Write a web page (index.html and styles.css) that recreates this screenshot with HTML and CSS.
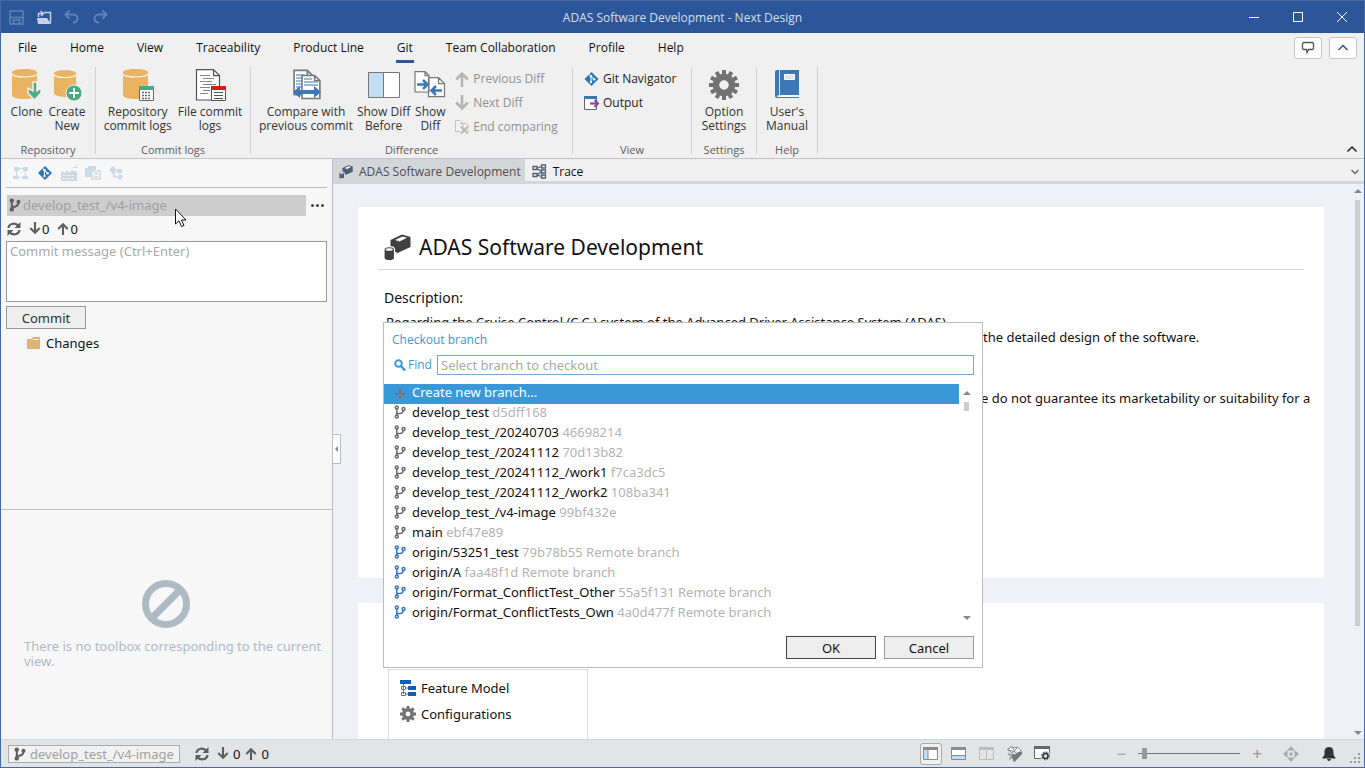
FILE: index.html
```html
<!DOCTYPE html>
<html lang="en">
<head>
<meta charset="utf-8">
<title>ADAS Software Development - Next Design</title>
<link rel="stylesheet" href="styles.css">
</head>
<body>
<svg class="defs" aria-hidden="true">
  <symbol id="db" viewBox="0 0 26 32"><path fill="#e9b361" d="M0 3.500C0 1.500 5 0 12.500 0S25 1.500 25 3.500V26c0 2.500-5.500 4-12.500 4S0 28.500 0 26z"/><path fill="none" stroke="#fff" stroke-width="1.200" d="M0 5c1 2 6 3 12.500 3S24 7 25 5"/></symbol>
  <symbol id="branch" viewBox="0 0 12 14"><g fill="none" stroke="currentColor" stroke-width="1.500"><circle cx="2.800" cy="2.500" r="1.500"/><circle cx="2.800" cy="11.500" r="1.500"/><circle cx="9.500" cy="4" r="1.500"/><path d="M2.800 4v6M3 8.500h3q3 0 3.300-3"/></g></symbol>
  <symbol id="branch-bold" viewBox="0 0 12 14"><g fill="currentColor"><circle cx="2.800" cy="2.600" r="2.200"/><circle cx="2.800" cy="11.400" r="2.200"/><circle cx="9.500" cy="3.800" r="2"/></g><path fill="none" stroke="currentColor" stroke-width="2" d="M2.800 3v8M3 9q6.500 0 6.500-5"/></symbol>
  <symbol id="git" viewBox="0 0 14 14"><path fill="#2e75b5" d="M7 0l7 7-7 7-7-7z"/><g fill="#fff"><circle cx="6.500" cy="4.300" r="1.200"/><circle cx="6.500" cy="10" r="1.200"/><circle cx="9.600" cy="7.300" r="1.200"/></g><path fill="none" stroke="#fff" d="M4.500 2l2 2.300V10M6.500 4.300l3 3"/></symbol>
  <symbol id="down" viewBox="0 0 14 16"><path fill="none" stroke="currentColor" stroke-width="2.600" d="M7 0v13M1.200 7.500L7 13.300l5.800-5.800"/></symbol>
  <symbol id="up" viewBox="0 0 14 16"><path fill="none" stroke="currentColor" stroke-width="2.600" d="M7 16V3M1.200 8.500L7 2.700l5.800 5.800"/></symbol>
  <symbol id="sync" viewBox="0 0 14 14"><path fill="none" stroke="currentColor" stroke-width="2.200" d="M1.500 6C2 1 8.500.3 11.500 3.800M12.500 8c-.5 5-7 5.700-10 2.200"/><path fill="currentColor" d="M13.500 0v6h-6zM.5 14V8h6z"/></symbol>
  <symbol id="gear" viewBox="0 0 30 30"><circle cx="15" cy="15" r="8" fill="none" stroke="currentColor" stroke-width="6.500"/><path stroke="currentColor" stroke-width="4" d="M15 0v6M15 24v6M0 15h6M24 15h6M7.500 2l3 5.200M19.500 22.800l3 5.200M22.500 2l-3 5.200M10.500 22.800l-3 5.200M2 7.500l5.200 3M22.800 19.500l5.200 3M2 22.500l5.200-3M22.800 10.500l5.200-3"/></symbol>
  <symbol id="gear-small" viewBox="0 0 16 16"><circle cx="8" cy="8" r="4.200" fill="none" stroke="currentColor" stroke-width="3.600"/><path stroke="currentColor" stroke-width="3" d="M8 0v3M8 13v3M0 8h3M13 8h3M2.300 2.300l2.200 2.200M11.500 11.500l2.200 2.200M13.700 2.300l-2.200 2.200M4.500 11.500l-2.200 2.200"/></symbol>
  <symbol id="shapes" viewBox="0 0 27 27"><path fill="currentColor" d="M6.500 6L18 .500l8.500 2.500V13l-13 6L6.500 15z"/><path fill="#fff" d="M11 6l7.500-3.500 4.500 1.300-7.500 3.700z"/><path fill="currentColor" stroke="#fff" stroke-width="1.200" d="M0 15.500c0-3.800 10.500-3.800 10.500 0V24c0 3.500-10.500 3.500-10.500 0z"/><ellipse cx="5.200" cy="15.500" rx="3.600" ry="1.300" fill="#fff"/></symbol>
  <symbol id="page" viewBox="0 0 20 24"><path fill="#fff" stroke="currentColor" stroke-width="1.500" d="M1 1h12l5 5v17H1zM13 1v5h5"/></symbol>
</svg>

<div class="window">
  <header class="titlebar">
    <div class="quick">
      <button aria-label="Save"><svg class="dim" width="15" height="15"><path fill="none" stroke="#fff" stroke-width="1.500" d="M1 1h13v13H1zM1 7.500h13M4.500 14v-4h6v4"/></svg></button>
      <button aria-label="Open"><svg width="16" height="16"><path fill="none" stroke="#c5d2e7" stroke-width="1.500" d="M2.500 8V4.500H7M4.500 2L7.500 4.500 5 7M8 3.500h6.500V14"/><path fill="#c5d2e7" d="M1 9h10l4 6H2z"/></svg></button>
      <button aria-label="Undo"><svg class="dim" width="16" height="16"><path fill="none" stroke="#fff" stroke-width="2" d="M5.500 1.500l-4 4 4 4M2 5.500h7c6 0 6 8 0 8"/></svg></button>
      <button aria-label="Redo"><svg class="dim" width="16" height="16"><path fill="none" stroke="#fff" stroke-width="2" d="M10.500 1.500l4 4-4 4M14 5.500H7c-6 0-6 8 0 8"/></svg></button>
    </div>
    <h1>ADAS Software Development - Next Design</h1>
    <div class="winctl">
      <button aria-label="Minimize"><svg width="12" height="12"><path stroke="#fff" d="M1 6.500h10"/></svg></button>
      <button aria-label="Maximize"><svg width="12" height="12"><path fill="none" stroke="#fff" d="M1.500 1.500h9v9h-9z"/></svg></button>
      <button aria-label="Close"><svg width="12" height="12"><path stroke="#fff" d="M1 1l10 10M11 1L1 11"/></svg></button>
    </div>
  </header>

  <nav class="menu">
    <button>File</button><button>Home</button><button>View</button><button>Traceability</button><button>Product Line</button><button class="on">Git</button><button>Team Collaboration</button><button>Profile</button><button>Help</button>
    <div class="menu-right">
      <button class="chip" aria-label="Feedback"><svg width="14" height="14"><path fill="none" stroke="#555" stroke-width="1.300" d="M2.500 1.500h9l1 1v5l-1 1H7.500L6 11.500l-.5-3h-3l-1-1v-5z"/></svg></button>
      <button class="chip" aria-label="Collapse"><svg width="12" height="12"><path fill="none" stroke="#2b579a" stroke-width="1.500" d="M1.500 8L6 3.500 10.500 8"/></svg></button>
    </div>
  </nav>

  <div class="ribbon">
    <section class="group g-repo">
      <div class="tools">
        <button class="big"><svg width="32" height="32"><use href="#db" x="1" y="0" width="26" height="32"/><path fill="#4db083" stroke="#f0f0f0" stroke-width="1.500" d="M22 13h4v9l4-3v5l-6.500 7-6.500-7v-5l5 3z"/></svg><span>Clone</span></button>
        <button class="big"><svg width="32" height="32"><use href="#db" x="3" y="1" width="23" height="29"/><circle cx="23" cy="24" r="8" fill="#48ac82" stroke="#f0f0f0"/><path stroke="#fff" stroke-width="2" d="M23 19v10M18 24h10"/></svg><span>Create<br>New</span></button>
      </div>
      <h2>Repository</h2>
    </section>
    <section class="group g-logs">
      <div class="tools">
        <button class="big"><svg width="32" height="32"><use href="#db" x="1" y="0" width="26" height="32"/><path fill="#fff" stroke="#666" d="M17.500 17.500h14v14h-14z"/><path fill="#48ac82" d="M17 17h15v4H17z"/><path stroke="#666" stroke-width="1.500" stroke-dasharray="2 1" d="M20 23.500h9M20 26.500h9M20 29.500h9"/></svg><span>Repository<br>commit logs</span></button>
        <button class="big"><svg width="32" height="32"><path fill="#fff" stroke="#555" stroke-width="1.200" d="M2.500.600h17l6 6V31h-23zM19.500.600v6h6"/><path stroke="#888" d="M6 6.500h10M9 9.500h11M6 12.500h12M9 15.500h13M6 18.500h10M9 21.500h7M6 24.500h8"/><path fill="#fff" stroke="#555" d="M17.500 17.500h14v14h-14z"/><path fill="#d81e05" d="M17 17h15v4H17z"/><path stroke="#555" d="M20 23.500h9M20 26.500h9M20 29.500h9"/></svg><span>File commit<br>logs</span></button>
      </div>
      <h2>Commit logs</h2>
    </section>
    <section class="group g-diff">
      <div class="tools">
        <button class="big"><svg width="32" height="32"><use href="#page" x="3" y="0" width="22" height="27" color="#777"/><path stroke="#78a7d4" stroke-width="1.500" d="M6 6h9M6 9h12M6 12h7M6 15h7M6 18h7"/><use href="#page" x="11" y="5" width="21" height="26" color="#777"/><path stroke="#78a7d4" stroke-width="1.500" d="M14 10h8M14 13h14M14 16h14"/><path fill="#3c78b5" d="M3 23l7-6v4h14v-4l7 6-7 6v-4H10v4z"/></svg><span>Compare with<br>previous commit</span></button>
        <button class="big"><svg width="34" height="32"><path fill="#fff" stroke="#777" d="M1.500 3.500h31v25h-31z"/><path fill="#c1dff2" stroke="#777" d="M1.500 3.500h15v25h-15z"/></svg><span>Show Diff<br>Before</span></button>
        <button class="big"><svg width="32" height="32"><path fill="#fff" stroke="#777" stroke-width="1.200" d="M1 2.600h10l4 4V23H1zM11 2.600v4h4M14.500 8.600h10l6 6v13h-16zM24.500 8.600v6h6"/><path fill="none" stroke="#3c78b5" stroke-width="2.500" d="M3 15.500h10M9 11l4.500 4.500L9 20M28 21.500H18M22 17l-4.500 4.500L22 26"/></svg><span>Show<br>Diff</span></button>
        <div class="stack">
          <button class="small off"><svg width="14" height="16"><use href="#up"/></svg>Previous Diff</button>
          <button class="small off"><svg width="14" height="16"><use href="#down"/></svg>Next Diff</button>
          <button class="small off"><svg width="14" height="16"><path fill="none" stroke="#c4c4c4" d="M5 12.500H.500v-11H5l3 3v8M5 4.500h6l3 3v5"/><path stroke="#bbb" stroke-width="2.200" d="M6 7.500l7 7M13 7.500l-7 7"/></svg>End comparing</button>
        </div>
      </div>
      <h2>Difference</h2>
    </section>
    <section class="group g-view">
      <div class="tools">
        <div class="stack">
          <button class="small"><svg width="15" height="14"><use href="#git"/></svg>Git Navigator</button>
          <button class="small"><svg width="15" height="14"><path fill="#fff" stroke="#666" d="M.500.500h12v13H.500z"/><path fill="#3c78b5" d="M0 0h13v3H0z"/><path stroke="#f0f0f0" stroke-width="5" d="M7 7.500h8"/><path fill="none" stroke="#8544a5" stroke-width="2" d="M6 7.500h8M10.500 4l3.500 3.500-3.500 3.500"/></svg>Output</button>
        </div>
      </div>
      <h2>View</h2>
    </section>
    <section class="group g-set">
      <div class="tools"><button class="big"><svg class="c-gear" width="32" height="32"><use href="#gear" x="1" y="1" width="30" height="30"/></svg><span>Option<br>Settings</span></button></div>
      <h2>Settings</h2>
    </section>
    <section class="group g-help">
      <div class="tools"><button class="big"><svg width="32" height="32"><path fill="#3c78b5" d="M4 3q0-2 2-2h22v25H8q-2 0-2 2h22v1H7q-3 0-3-2z"/><path fill="#fff" d="M6.500 26.500H28v1.500H7z"/><path stroke="#fff" stroke-width=".8" d="M8.500 1v25"/><path fill="#d8e6f5" stroke="#fff" d="M13.500 5.500h10v5h-10z"/></svg><span>User's<br>Manual</span></button></div>
      <h2>Help</h2>
    </section>
    <button class="fold" aria-label="Collapse ribbon"><svg width="12" height="10"><path fill="none" stroke="#222" stroke-width="1.500" d="M1.500 7.500L6 3l4.500 4.500"/></svg></button>
  </div>

  <div class="body">
    <aside class="side">
      <div class="git-pane">
        <div class="iconrow">
          <svg width="16" height="14" fill="#cbdae6"><path d="M1 1h5v4H1zM10 1h5v4h-5zM0 10h6v3H0zM9 10h6v3H9z"/><path fill="none" stroke="#cbdae6" d="M1 2.500h14M3.500 5v5M12.500 5v5"/></svg>
          <svg width="16" height="14"><use href="#git"/></svg>
          <svg width="16" height="16" fill="#cbdae6"><path d="M0 16V6l5 2V5.500l5 2V5l6 2v9zM12 2h3V0h1v3h-4z"/><path stroke="#f7f7f7" stroke-dasharray="2 1" d="M2 10.500h12M2 13.500h12"/></svg>
          <svg width="16" height="16" fill="#cbdae6"><path d="M0 3h3V1h8v4H6v7H0z"/><path fill="#f7f7f7" stroke="#cbdae6" stroke-width="1.500" d="M6.700 6h8.500v8H6.700zM9 8.500h4M9 11.500h4"/></svg>
          <svg width="16" height="16" fill="#cbdae6"><path d="M0 5l4-4 4 4-4 4zM8 4h5v4H8zM11 9l3 3-3 3-3-3z"/><path fill="none" stroke="#cbdae6" stroke-width="1.500" d="M5 6v6h5"/></svg>
        </div>
        <div class="branchrow">
          <button class="branchbox"><svg width="12" height="14"><use href="#branch-bold"/></svg>develop_test_/v4-image</button>
          <button class="dots" aria-label="More"><i></i><i></i><i></i></button>
        </div>
        <div class="syncrow"><svg width="14" height="14"><use href="#sync"/></svg><span><svg width="12" height="13"><use href="#down"/></svg>0</span><span><svg width="12" height="13"><use href="#up"/></svg>0</span></div>
        <textarea aria-label="Commit message" placeholder="Commit message (Ctrl+Enter)"></textarea>
        <button class="btn commit">Commit</button>
        <div class="changes"><svg width="14" height="12"><path fill="#deb473" d="M0 2h5l1-2h7v12H0z"/><path stroke="#f7f7f7" d="M6 2.500h6"/></svg>Changes</div>
      </div>
      <div class="toolbox">
        <svg width="48" height="48"><g fill="none" stroke="#afbac4" stroke-width="7"><circle cx="24" cy="24" r="20.500"/><path d="M10 38L38 10"/></g></svg>
        <p>There is no toolbox corresponding to the current view.</p>
      </div>
    </aside>

    <main class="main">
      <div class="tabs">
        <button class="tab on"><svg width="14" height="14"><use href="#shapes"/></svg>ADAS Software Development</button>
        <button class="tab"><svg width="15" height="15"><g fill="none" stroke="#4d6079" stroke-width="1.300"><path d="M1 2.500h4v3H1zM1 9.500h4v3H1zM9.500 1h4v3h-4zM9.500 6h4v3h-4zM9.500 11h4v3h-4zM5 4l4.500-1.500M5 4.500l4.500 3M5 11l4.500-3.500M5 11l4.500 1.500"/></g></svg>Trace</button>
        <button class="more" aria-label="Tab list"><svg width="10" height="8"><path fill="none" stroke="#666" stroke-width="1.300" d="M1.500 2L5 5.500 8.500 2"/></svg></button>
      </div>
      <div class="view">
        <div class="cards">
          <article class="card first">
            <h2 class="doc-title"><svg width="27" height="27"><use href="#shapes"/></svg>ADAS Software Development</h2>
            <h3>Description:</h3>
            <div class="prose">
              <p>Regarding the Cruise Control (C.C.) system of the Advanced Driver Assistance System (ADAS).</p>
              <p class="tail">the detailed design of the software.</p>
              <p class="tail last">e do not guarantee its marketability or suitability for a</p>
            </div>
          </article>
          <article class="card second">
            <ul class="models">
              <li><svg width="16" height="16"><path fill="#1160b7" d="M0 0h11v4H0zM8 6h8v4H8zM8 12h8v4H8z"/><path fill="none" stroke="#777" d="M3.500 4v10M1.500 6.500h4v3h-4zM1.500 12.500h4v3h-4zM5.500 8H8M5.500 14H8"/></svg>Feature Model</li>
              <li><svg width="16" height="16" class="c-gear"><use href="#gear-small"/></svg>Configurations</li>
            </ul>
          </article>
        </div>
        <div class="vscroll"><i class="tri up"></i><b></b><i class="tri down"></i></div>
        <button class="grip" aria-label="Collapse panel"><i></i></button>
      </div>
    </main>
  </div>

  <footer class="status">
    <button class="status-branch"><svg width="12" height="14"><use href="#branch-bold"/></svg>develop_test_/v4-image</button>
    <div class="status-sync"><svg width="14" height="14"><use href="#sync"/></svg><span><svg width="12" height="13"><use href="#down"/></svg>0</span><span><svg width="12" height="13"><use href="#up"/></svg>0</span></div>
    <div class="status-tools">
      <button class="on" aria-label="Left pane"><svg width="16" height="14"><path fill="#fff" stroke="#8a8a8a" d="M.500.500h14v12H.500z"/><path fill="#c0dcfa" d="M1 3h4v9H1z"/><path fill="#8a8a8a" d="M0 0h15v3H0zM4.500 2h1v11h-1z"/></svg></button>
      <button aria-label="Bottom pane"><svg width="16" height="14"><path fill="#fff" stroke="#8a8a8a" d="M.500.500h14v12H.500z"/><path fill="#c0dcfa" d="M1 9h13v3H1z"/><path fill="#8a8a8a" d="M0 0h15v3H0zM0 8h15v1H0z"/></svg></button>
      <button aria-label="Split pane"><svg width="16" height="14"><path fill="#e4e4e4" stroke="#bdbdbd" d="M.500.500h14v12H.500zM7.500 0v13"/><path fill="#bdbdbd" d="M0 0h15v3H0z"/></svg></button>
      <button aria-label="Tag"><svg width="17" height="17"><path fill="#fff" stroke="#888" d="M1.500 4.500l4-3 3 1.500 3-1 4 4-4 3-3-2.500-3 1z"/><path fill="none" stroke="#888" d="M5.500 1.500L9 6.500M1.500 4.500l6 2 4-4"/><path fill="#777" d="M5 11l1-2.500 3 1 4-3 3 .5v2l-8 8.500-1-3z"/><path fill="none" stroke="#999" stroke-width="1.500" d="M2 8.500l4 2.500-2.500 3.500"/></svg></button>
      <button aria-label="Window settings"><svg width="17" height="15"><path fill="#fff" stroke="#666" d="M.500.500h15v12H.500z"/><path fill="#666" d="M0 0h16v3H0z"/><circle cx="11.500" cy="10" r="5" fill="#e2e4e6"/><circle cx="11.500" cy="10" r="2.500" fill="none" stroke="#333" stroke-width="1.500"/><circle cx="11.500" cy="10" r="3.800" fill="none" stroke="#333" stroke-dasharray="1.500 1.500"/></svg></button>
    </div>
    <div class="zoomer"><span>−</span><input type="range" aria-label="Zoom" min="0" max="100" value="4"><span>+</span></div>
    <svg class="s-move" width="16" height="16" fill="#aaa"><path d="M8 0l4 4.500H4zM8 16l4-4.500H4zM0 8l4.500-4v8zM16 8l-4.500-4v8zM6.500 6.500h3v3h-3z"/></svg>
    <svg class="s-bell" width="14" height="14"><path fill="#333" d="M7 0c4 0 4.500 3 4.500 6 0 2.500.5 3 2 4.500v1H.5v-1C2 9 2.500 8.500 2.500 6c0-3 .5-6 4.500-6zM5 12h4q-.5 2-2 2t-2-2z"/></svg>
    <svg class="s-size" width="12" height="12" fill="#999"><path d="M9 1h2v2H9zM5 5h2v2H5zM9 5h2v2H9zM1 9h2v2H1zM5 9h2v2H5zM9 9h2v2H9z"/></svg>
  </footer>

  <div class="dialog" role="dialog" aria-label="Checkout branch">
    <h2>Checkout branch</h2>
    <div class="find"><label for="find"><svg width="12" height="12"><circle cx="4.500" cy="4.500" r="3.300" fill="none" stroke="#3b99d8" stroke-width="2"/><path stroke="#3b99d8" stroke-width="2.500" d="M7 7l4 4.500"/></svg>Find</label><input id="find" type="text" placeholder="Select branch to checkout"></div>
    <div class="listwrap">
      <ul class="list">
        <li class="sel"><svg width="12" height="14"><path stroke="#777" stroke-width="2" d="M6 4v10M1 9h10"/></svg>Create new branch...</li>
        <li><svg width="12" height="14"><use href="#branch"/></svg>develop_test <em>d5dff168</em></li>
        <li><svg width="12" height="14"><use href="#branch"/></svg>develop_test_/20240703 <em>46698214</em></li>
        <li><svg width="12" height="14"><use href="#branch"/></svg>develop_test_/20241112 <em>70d13b82</em></li>
        <li><svg width="12" height="14"><use href="#branch"/></svg>develop_test_/20241112_/work1 <em>f7ca3dc5</em></li>
        <li><svg width="12" height="14"><use href="#branch"/></svg>develop_test_/20241112_/work2 <em>108ba341</em></li>
        <li><svg width="12" height="14"><use href="#branch"/></svg>develop_test_/v4-image <em>99bf432e</em></li>
        <li><svg width="12" height="14"><use href="#branch"/></svg>main <em>ebf47e89</em></li>
        <li class="remote"><svg width="12" height="14"><use href="#branch"/></svg>origin/53251_test <em>79b78b55 Remote branch</em></li>
        <li class="remote"><svg width="12" height="14"><use href="#branch"/></svg>origin/A <em>faa48f1d Remote branch</em></li>
        <li class="remote"><svg width="12" height="14"><use href="#branch"/></svg>origin/Format_ConflictTest_Other <em>55a5f131 Remote branch</em></li>
        <li class="remote"><svg width="12" height="14"><use href="#branch"/></svg>origin/Format_ConflictTests_Own <em>4a0d477f Remote branch</em></li>
      </ul>
      <div class="lscroll"><i class="tri up"></i><b></b><i class="tri down"></i></div>
    </div>
    <div class="actions"><button class="btn ok">OK</button><button class="btn">Cancel</button></div>
  </div>

  <svg class="cursor" width="14" height="20"><path fill="#fff" stroke="#111" d="M1.500 1v15l3.500-3.200 2.500 5.700 2.500-1-2.500-5.500h4.500z"/></svg>
</div>
</body>
</html>
```
FILE: styles.css
```css
* { box-sizing: border-box; }
body { margin: 0; font: 13px/20px "Noto Sans", sans-serif; color: #111; }
button, input, textarea { font: inherit; color: inherit; margin: 0; }
button { background: none; border: 0; padding: 0; }
h1, h2, h3, p, ul { margin: 0; padding: 0; font-weight: normal; }
ul { list-style: none; }
svg { display: block; flex: none; }
.defs { position: absolute; width: 0; height: 0; }

.window { position: relative; height: 100vh; display: flex; flex-direction: column; border: 1px solid #4469a3; background: #f0f0f0; overflow: hidden; }

.titlebar { display: grid; grid-template-columns: 1fr auto 1fr; align-items: center; height: 32px; flex: none; background: #2b579a; color: #d5deeb; }
.titlebar h1 { padding-top: 2px; font: 12px/16px "Open Sans", sans-serif; }
.quick { display: flex; gap: 12px; padding-left: 8px; }
.dim { opacity: .25; }
.winctl { display: flex; justify-content: flex-end; gap: 32px; padding-right: 16px; }

.menu { display: flex; gap: 1px; height: 30px; flex: none; padding-left: 1px; font-family: "Open Sans", sans-serif; font-size: 12px; }
.menu > button { padding: 0 16px; position: relative; }
.menu > .on::after { content: ""; position: absolute; left: 15px; right: 15px; bottom: 0; height: 3px; background: #2b579a; }
.menu-right { margin-left: auto; display: flex; align-items: center; gap: 7px; padding-right: 7px; }
.chip { display: grid; place-items: center; width: 28px; height: 22px; border: 1px solid #c4c4c4; border-radius: 3px; background: #fff; }

.ribbon { display: flex; height: 96px; flex: none; padding: 4px 0; border-bottom: 1px solid #c2c3c6; font: 12px/14px "Open Sans", sans-serif; color: #333; }
.group { display: flex; flex-direction: column; justify-content: space-between; align-items: center; border-right: 1px solid #d2d2d2; }
.group h2 { font-size: 11px; line-height: 8px; color: #5c5c5c; }
.g-repo { width: 95px; } .g-logs { width: 155px; } .g-diff { width: 322px; }
.g-view { width: 119px; } .g-set { width: 65px; } .g-help { width: 61px; }
.tools { display: flex; justify-content: center; gap: 6px; }
.g-diff .tools { align-self: stretch; justify-content: flex-start; gap: 4px; padding-left: 8px; }
.g-diff .stack { padding-left: 5px; }
.g-view .tools { align-self: stretch; justify-content: flex-start; padding-left: 11px; }
.big { display: flex; flex-direction: column; align-items: center; gap: 4px; padding-top: 2px; justify-content: flex-start; white-space: nowrap; }
.stack { display: flex; flex-direction: column; }
.small { display: flex; align-items: center; gap: 4px; height: 24px; white-space: nowrap; color: #222; }
.off { color: #909090; }
.off svg { color: #b5b5b5; }
.c-gear { color: #737373; }
.fold { margin-left: auto; align-self: flex-end; padding-right: 6px; }

.body { flex: 1; min-height: 0; display: flex; }
.side { width: 332px; flex: none; display: flex; flex-direction: column; background: #f7f7f7; border-right: 1px solid #bcbdc0; }
.git-pane { height: 351px; flex: none; padding: 0 5px; border-bottom: 1px solid #bcbdc0; }
.iconrow { display: flex; align-items: center; gap: 8px; height: 29px; padding-left: 7px; border-bottom: 1px solid #bcbdc0; }
.branchrow { display: flex; padding: 7px 0 0 1px; }
.branchbox { flex: 1; display: flex; align-items: center; gap: 2px; height: 21px; margin-right: 5px; padding: 0 0 2px 2px; background: #cdcdcd; color: #a0a0a0; }
.branchbox svg, .syncrow svg, .status svg { color: #5e5e5e; }
.dots { display: flex; align-items: center; gap: 2px; padding-right: 3px; }
.dots i { width: 3px; height: 3px; border-radius: 2px; background: #444; }
.syncrow { display: flex; align-items: center; gap: 8px; height: 25px; padding-left: 1px; }
.syncrow span { display: flex; align-items: center; gap: 1px; }
textarea { display: block; width: 100%; height: 61px; padding: 0 3px; border: 1px solid #999; background: #fff; line-height: 18px; resize: none; outline: 0; }
::placeholder { color: #a9a9a9; opacity: 1; }
.btn { width: 90px; height: 23px; border: 1px solid #9a9a9a; background: #eee; padding-top: 1px; line-height: 20px; }
.commit { width: 80px; margin-top: 4px; color: #333; }
.changes { display: flex; align-items: center; gap: 5px; height: 20px; margin-top: 4px; padding-left: 21px; }
.toolbox { display: flex; flex-direction: column; align-items: center; gap: 11px; padding: 70px 2px 0 0; color: #afbac4; line-height: 15px; }
.toolbox p { align-self: stretch; padding-left: 23px; }

.main { flex: 1; min-width: 0; display: flex; flex-direction: column; background: #f0f1f6; }
.tabs { display: flex; height: 25px; flex: none; background: linear-gradient(#f0f0f0 22px, #d4d5d9 22px); font: 12px/22px "Open Sans", sans-serif; }
.tab { display: flex; align-items: center; gap: 6px; padding: 0 7px; }
.tab.on { padding: 0 4px 0 6px; background: #d4d5d9; color: #505050; }
.tab svg { color: #4d6079; }
.more { margin-left: auto; padding-right: 4px; }
.view { flex: 1; min-height: 0; position: relative; display: flex; overflow: hidden; }
.cards { flex: 1; min-width: 0; display: flex; flex-direction: column; gap: 25px; padding: 23px 27px 0 25px; }
.card { background: #fff; border-radius: 2px; flex: none; }
.first { height: 371px; padding: 20px; }
.doc-title { display: flex; align-items: center; gap: 8px; height: 43px; padding: 0 0 2px 6px; border-bottom: 1px solid #d9d9d9; font-size: 21px; }
.doc-title svg { color: #404040; }
.card h3 { font-size: 14px; line-height: 20px; padding: 18px 0 0 6px; }
.prose { padding: 7px 0 0 8px; line-height: 15px; white-space: nowrap; }
.tail { padding-left: 597px; }
.last { padding: 46px 0 0 595px; }
.second { height: 400px; padding: 66px 30px 0; }
.models { width: 200px; height: 200px; padding: 5px 11px; border: 1px solid #ddd; }
.models li { display: flex; align-items: center; gap: 5px; height: 26px; }

.tri { border: 4px solid transparent; }
.tri.up { border-top: 0; border-bottom-color: #888; }
.tri.down { border-bottom: 0; border-top-color: #888; }
.vscroll { width: 13px; flex: none; display: flex; flex-direction: column; align-items: center; padding: 5px 0 4px; }
.vscroll b { width: 5px; height: 426px; margin: 7px 0 auto; background: #cdcdcd; }
.grip { position: absolute; left: 0; top: 250px; width: 8px; height: 30px; border: 1px solid #bbb; border-left: 0; background: #fff; }
.grip i { display: block; width: 0; border: 3px solid transparent; border-left: 0; border-right-color: #888; margin-left: 2px; }

.status { display: flex; align-items: center; height: 28px; flex: none; padding: 0 3px 0 7px; border-top: 1px solid #d3d5d7; background: #e2e4e6; }
.status-branch { display: flex; align-items: center; gap: 4px; width: 172px; height: 18px; padding-left: 5px; border: 1px solid #a9abad; background: #f2f2f2; color: #a0a0a0; white-space: nowrap; }
.status-sync { display: flex; align-items: center; gap: 8px; padding-left: 15px; }
.status-sync span { display: flex; align-items: center; gap: 4px; }
.status-sync span + span { margin-left: -3px; }
.status-tools { margin-left: auto; display: flex; gap: 6px; }
.status-tools button { display: grid; place-items: center; width: 22px; height: 22px; }
.status-tools .on { border: 1px solid #aaa; border-radius: 3px; background: #f0f0f0; }
.zoomer { display: flex; align-items: center; gap: 12px; margin-left: 63px; color: #999; font-size: 17px; }
.zoomer input { appearance: none; width: 102px; height: 12px; background: linear-gradient(#777, #777) center / 100% 1px no-repeat; }
.zoomer input::-webkit-slider-thumb { appearance: none; width: 5px; height: 11px; background: #999; }
.s-move { margin: 0 23px 0 21px; }
.s-bell { margin-right: 13px; }
.s-size { align-self: flex-end; margin-bottom: 3px; }

.dialog { position: absolute; left: 382px; top: 321px; width: 600px; border: 1px solid #bcbcbc; background: #fff; padding: 7px 8px 8px 0; color: #111; }
.dialog h2 { padding-left: 8px; font: 12px/20px "Open Sans", sans-serif; color: #3b99d8; }
.find { display: flex; align-items: center; padding: 5px 0 0 10px; }
.find label { display: flex; align-items: center; gap: 2px; width: 43px; color: #3b99d8; font-family: "Open Sans", sans-serif; font-size: 12px; }
.find input { flex: 1; min-width: 0; height: 20px; padding: 0 3px; border: 1px solid #6da9d9; outline: 0; }
.listwrap { display: flex; margin-top: 9px; }
.list { flex: 1; }
.list li { display: flex; align-items: center; height: 20px; padding: 0 0 4px 10px; line-height: 16px; white-space: pre; }
.list svg { margin-right: 6px; color: #6b6b6b; }
.list em { font-style: normal; color: #b3b3b3; }
.list .sel { background: #3a98d8; color: #fff; }
.list .remote svg { color: #3c78b5; }
.lscroll { width: 15px; display: flex; flex-direction: column; align-items: center; padding: 7px 0 4px; }
.lscroll b { width: 5px; height: 9px; margin: 7px 0 auto; background: #cdcdcd; }
.actions { display: flex; justify-content: flex-end; gap: 8px; margin-top: 12px; }
.ok { border-color: #444; }

.cursor { position: absolute; left: 173px; top: 207px; }
```
